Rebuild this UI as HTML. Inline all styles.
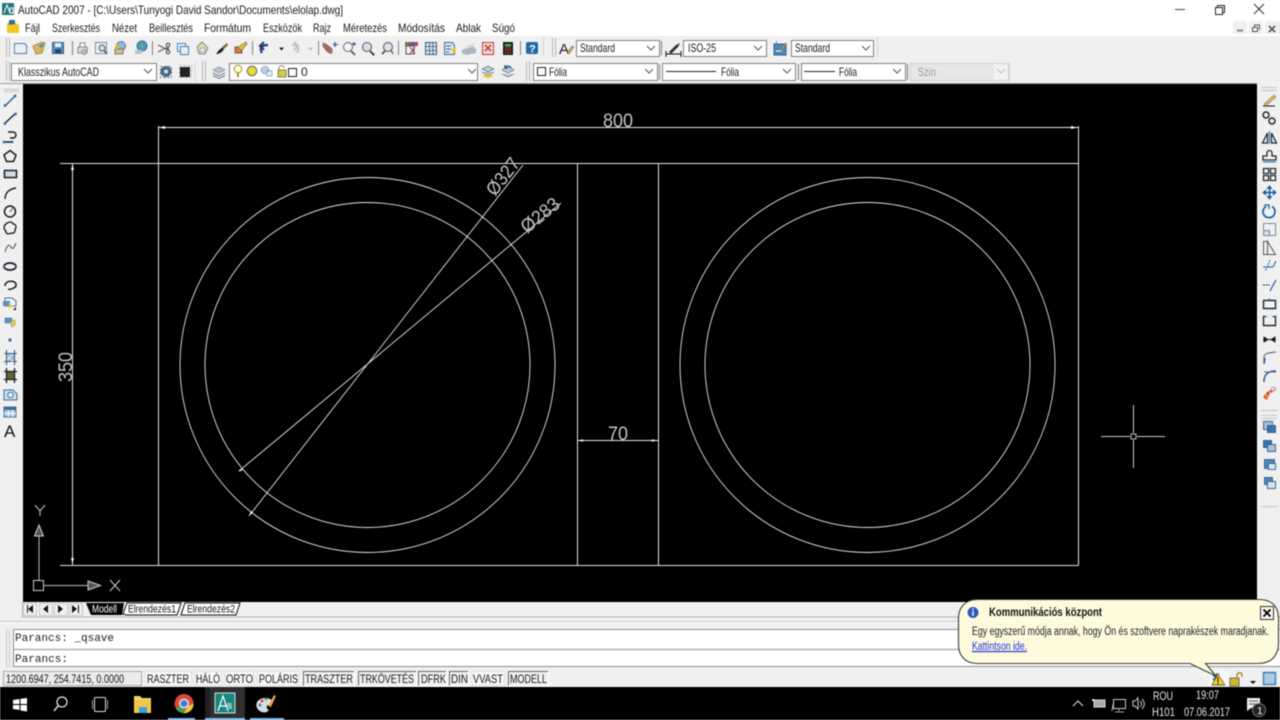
<!DOCTYPE html>
<html lang="hu"><head><meta charset="utf-8"><title>AutoCAD 2007</title>
<style>
html,body{margin:0;padding:0;width:1280px;height:720px;overflow:hidden;background:#f0f0f0}
svg{display:block;position:absolute;left:0;top:0;filter:blur(.45px)}
text{font-family:"Liberation Sans",sans-serif;font-size:12px;fill:#1a1a1a}
.m{font-family:"Liberation Mono",monospace;font-size:11px}
.d{fill:#c4c4c4;font-size:19px}
.ln{stroke:#e4e4e4;stroke-width:1;fill:none}
.th{stroke:#e4e4e4;stroke-width:.9;fill:none}
.c{fill:#fff;stroke:#808080}
.ar{fill:none;stroke:#555;stroke-width:1}
.g{stroke:#b5b5b5;stroke-width:1;fill:none}
</style></head><body>
<svg width="1280" height="720" viewBox="0 0 1280 720" xmlns="http://www.w3.org/2000/svg">
<!-- base -->
<rect width="1280" height="720" fill="#f0f0f0"/>
<rect width="1280" height="36" fill="#fff"/>
<rect x="23" y="84" width="1234" height="518" fill="#000"/>
<path d="M0 83.500H1257" stroke="#a0a0a0"/>
<!-- title -->
<rect x="2" y="3" width="12" height="12" fill="#1f7a78"/><path d="M4 13l3-8 3 8M10 8h3v5h-3z" stroke="#fff" fill="none"/>
<text x="18" y="14" textLength="325" lengthAdjust="spacingAndGlyphs">AutoCAD 2007 - [C:\Users\Tunyogi David Sandor\Documents\elolap.dwg]</text>
<path d="M1175 9.500h10" stroke="#444"/><path d="M1215.500 7.500h7v7h-7zM1217.500 7.500v-2h7v7h-2" fill="none" stroke="#222"/><path d="M1254 4l10 10M1264 4l-10 10" stroke="#333"/>
<!-- menu -->
<path d="M7 33V23l5-2 7 4v8z" fill="#f2c81e"/><path d="M9 25V20h6v4z" fill="#2c6db0"/>
<text x="25" y="32" textLength="15" lengthAdjust="spacingAndGlyphs">Fájl</text>
<text x="52" y="32" textLength="48" lengthAdjust="spacingAndGlyphs">Szerkesztés</text>
<text x="112" y="32" textLength="25" lengthAdjust="spacingAndGlyphs">Nézet</text>
<text x="149" y="32" textLength="44" lengthAdjust="spacingAndGlyphs">Beillesztés</text>
<text x="204" y="32" textLength="47" lengthAdjust="spacingAndGlyphs">Formátum</text>
<text x="263" y="32" textLength="39" lengthAdjust="spacingAndGlyphs">Eszközök</text>
<text x="313" y="32" textLength="18" lengthAdjust="spacingAndGlyphs">Rajz</text>
<text x="343" y="32" textLength="44" lengthAdjust="spacingAndGlyphs">Méretezés</text>
<text x="398" y="32" textLength="47" lengthAdjust="spacingAndGlyphs">Módosítás</text>
<text x="456" y="32" textLength="25" lengthAdjust="spacingAndGlyphs">Ablak</text>
<text x="492" y="32" textLength="23" lengthAdjust="spacingAndGlyphs">Súgó</text>
<rect x="1233" y="21" width="14" height="13" fill="#f0f0f0"/><rect x="1249" y="21" width="14" height="13" fill="#f0f0f0"/><rect x="1265" y="21" width="15" height="13" fill="#f0f0f0"/>
<path d="M1237 30.500h6" stroke="#556" stroke-width="1.300"/><path d="M1252.500 27.500h5v4h-5zM1254.500 27v-2h5v4h-1" fill="none" stroke="#556"/><path d="M1269 26l6 6M1275 26l-6 6" stroke="#556" stroke-width="1.600"/>
<!-- toolbar grips and separators -->
<path d="M6.500 38v19M9.500 38v19M6.500 61v20M9.500 61v20M202.500 61v20M205.500 61v20M552.500 38v19M555.500 38v19M526.500 61v20M529.500 61v20" class="g"/>
<path d="M72.500 41v14M152.500 41v14M252.500 41v14M318.500 41v14M398.500 41v14M520.500 41v14M661.500 41v14M776.500 41v14M659.500 64v16M798.500 64v16M907.500 64v16" stroke="#808080"/>
<path d="M543.500 37v20M877.500 37v20M1009.500 62v20M195 62v20" stroke="#d4d4d4"/>
<!-- combos -->
<rect class="c" x="576.500" y="40.500" width="83" height="16"/><rect class="c" x="683.500" y="40.500" width="83" height="16"/><rect class="c" x="791.500" y="40.500" width="82" height="16"/>
<rect class="c" x="11.500" y="63.500" width="145" height="17"/><rect class="c" x="229.500" y="63.500" width="248" height="17"/><rect class="c" x="533.500" y="63.500" width="124" height="17"/><rect class="c" x="662.500" y="63.500" width="133" height="17"/><rect class="c" x="801.500" y="63.500" width="104" height="17"/>
<rect x="910.500" y="63.500" width="98" height="17" fill="#e7e7e7" stroke="#d0d0d0"/><rect x="994" y="64" width="14" height="16" fill="#f2f2f2"/>
<path class="ar" d="M647 46l4 4 4-4M754 46l4 4 4-4M862 46l4 4 4-4M144 69l4 4 4-4M468 69l4 4 4-4M645 69l4 4 4-4M783 69l4 4 4-4M893 69l4 4 4-4"/><path d="M997 69l4 4 4-4" fill="none" stroke="#bbb"/>
<text x="580" y="52" textLength="35" lengthAdjust="spacingAndGlyphs">Standard</text>
<text x="688" y="52" textLength="28" lengthAdjust="spacingAndGlyphs">ISO-25</text>
<text x="795" y="52" textLength="35" lengthAdjust="spacingAndGlyphs">Standard</text>
<text x="18" y="76" textLength="81" lengthAdjust="spacingAndGlyphs">Klasszikus AutoCAD</text>
<text x="301" y="76">0</text>
<rect x="537.500" y="67.500" width="8" height="8" fill="#fff" stroke="#222"/><text x="549" y="76" textLength="18" lengthAdjust="spacingAndGlyphs">Fólia</text>
<path d="M666 71.500h50" stroke="#222"/><text x="721" y="76" textLength="18" lengthAdjust="spacingAndGlyphs">Fólia</text>
<path d="M804 71.500h31" stroke="#222"/><text x="839" y="76" textLength="18" lengthAdjust="spacingAndGlyphs">Fólia</text>
<text x="918" y="76" textLength="18" lengthAdjust="spacingAndGlyphs" style="fill:#9a9a9a">Szín</text>
<!-- toolbar row 1 icons -->
<path d="M14.500 43.500h10l2 2v8h-12z" fill="#e8f1fa" stroke="#4f7fa8"/>
<path d="M33 46l9-4 3 1-3 10-6 1z" fill="#d9b45a" stroke="#9a7b35" stroke-width=".8"/><path d="M38 46l6-3-2 5z" fill="#4a8fc9"/>
<path d="M52.500 42.500h11v11h-11z" fill="#5d8fc0" stroke="#2f5f90"/><rect x="55" y="43" width="6" height="4" fill="#e6eff8"/><rect x="55" y="49" width="6" height="4" fill="#29496b"/>
<path d="M78 47h9v6h-9z" fill="#ddd" stroke="#888"/><path d="M80 43h5v4h-5z" fill="#fff" stroke="#888"/><circle cx="84" cy="52" r="2.500" fill="#bbb" stroke="#888" stroke-width=".7"/>
<path d="M95.500 42.500h11v11h-11z" fill="#eef4fa" stroke="#6b8fae"/><circle cx="102" cy="48" r="3" fill="#cfe1f0" stroke="#555"/><path d="M104 50l3 4" stroke="#555" stroke-width="1.500"/>
<circle cx="121" cy="46" r="4.500" fill="#8eb7d8" stroke="#5f7c93"/><path d="M115 49h8v5h-8z" fill="#cfc088" stroke="#666" stroke-width=".8"/><circle cx="117" cy="47" r="2" fill="#e5b52a"/>
<circle cx="142" cy="46" r="5" fill="#4d95cc" stroke="#3a6e96"/><path d="M140 43l4 2-2 3zM135 50h8l-2 4h-6z" fill="#7cb35a"/><path d="M135 50h7v4h-7z" fill="#ccd" opacity=".8"/>
<path d="M158 45l8 4h3M158 52l8-4h3" stroke="#556" fill="none"/><circle cx="168" cy="45" r="1.800" fill="none" stroke="#333"/><circle cx="168" cy="52" r="1.800" fill="none" stroke="#333"/>
<path d="M177.500 43.500h8v8h-8z" fill="#e8f1fa" stroke="#4f7fa8"/><path d="M180.500 46.500h8v8h-8z" fill="#e8f1fa" stroke="#4f7fa8"/>
<path d="M197 47l5-5 6 6-3 6h-6z" fill="#e9d9a0" stroke="#7f8a95"/><path d="M200 48h5v4h-5z" fill="#dde8f2" stroke="#7f8a95" stroke-width=".6"/>
<path d="M216 54l3-4 8-6-5 8-4 2z" fill="#222"/><path d="M222 47l5-4 1 2-4 4z" fill="#7a6a45"/>
<path d="M235 47h7v6h-7z" fill="#e7783b" stroke="#335" stroke-width=".7"/><path d="M238 47l8-5 1 2-6 7z" fill="#e3c02b" stroke="#665" stroke-width=".7"/>
<path d="M262 53c-3-5 0-8 6-8M264 42l-4 4 4 4" stroke="#1c3f78" stroke-width="2.200" fill="none"/><path d="M279 47.500h5l-2.500 3z" fill="#222"/>
<path d="M297 53c3-5 0-8-5-8M294 42l4 4-4 4" stroke="#c4c4c4" stroke-width="2" fill="none"/><path d="M308 47.500h5l-2.500 3z" fill="#bbb"/>
<path d="M323 43c3 1 6 3 9 6v4c-3 1-5-1-9-7z" fill="#a76b66" stroke="#8a5550" stroke-width=".7"/><path d="M335 42v5M333 44.500h5" stroke="#2366aa" stroke-width="1.200"/>
<circle cx="348" cy="47" r="4.500" fill="#eef4fa" stroke="#6a6a6a"/><path d="M351 51l4 4" stroke="#555" stroke-width="1.600"/><path d="M352 44h4M354 42v4" stroke="#335" stroke-width=".9"/>
<circle cx="367" cy="47" r="4.500" fill="#cfe1f0" stroke="#555"/><path d="M370 51l3 3" stroke="#333" stroke-width="1.600"/><path d="M373 54l1 1" stroke="#000" stroke-width="2"/>
<circle cx="388" cy="47" r="4.500" fill="#dde" stroke="#555"/><path d="M385 51l-3 3" stroke="#444" stroke-width="1.600"/><path d="M391 50l2 4" stroke="#666" stroke-width="1.500"/>
<rect x="405" y="42" width="13" height="4" fill="#c23c6e"/><rect x="405" y="42" width="3" height="4" fill="#3e9a45"/><rect x="411" y="42" width="3" height="4" fill="#2a6bb0"/><path d="M406 46h8v8h-8z" fill="#eee" stroke="#555"/><path d="M410 47l5 7M415 47l-5 7" stroke="#933" stroke-width="1"/>
<rect x="425.500" y="42.500" width="11" height="12" fill="#d3e2ef" stroke="#44606f"/><path d="M425 46.500h11M425 50.500h11M429.500 42v12M433 42v12" stroke="#44606f" stroke-width=".8"/>
<path d="M444.500 42.500h8l2 3v9h-10z" fill="#d6e4f0" stroke="#446b8c"/><path d="M446 46h5M446 49h5M446 52h3" stroke="#446b8c"/><circle cx="454" cy="50" r="2" fill="#f0c521"/>
<path d="M462 50l10-4 4 3v4l-10 2-4-2z" fill="#a8b6c0"/><path d="M465 46l8-3 2 3-9 3z" fill="#d8e2e8"/>
<rect x="482.500" y="42.500" width="11" height="12" fill="#f5d8d8" stroke="#c0392b"/><path d="M485 45l6 6M491 45l-6 6" stroke="#c0392b" stroke-width="1.500"/>
<rect x="503" y="42" width="10" height="13" fill="#1c1c1c"/><rect x="505" y="44" width="6" height="2.500" fill="#4fae5a"/><path d="M505 48h6M505 50h6M505 52.500h6" stroke="#d04030" stroke-width="1.200" stroke-dasharray="1.500 .8"/>
<rect x="526" y="42" width="12" height="12" rx="2" fill="#2268aa"/><text x="529" y="52.500" style="fill:#fff;font-weight:bold;font-size:11px">?</text>
<!-- style icons -->
<text x="559" y="54" style="font-size:15px;fill:#222">A</text><path d="M567 53l5-7 2 1-5 7z" fill="#d2ad52" stroke="#555" stroke-width=".5"/>
<path d="M666 54h15M666 51v6M681 51v6" stroke="#111"/><path d="M669 52l7-7 4-2-2 4-7 7z" fill="#333"/>
<rect x="774" y="44" width="12" height="11" fill="#4f86bd" stroke="#305e8b"/><path d="M776 51h6" stroke="#fff"/><path d="M780 50l6-7 1 1-6 7z" fill="#c9a24a" stroke="#555" stroke-width=".4"/>
<!-- row 2 icons -->
<circle cx="166" cy="71.500" r="5.500" fill="#4a6c82"/><circle cx="166" cy="71.500" r="2" fill="#dde"/><path d="M160.500 66.500h11v11h-11z" fill="none" stroke="#667" stroke-dasharray="2 2"/>
<rect x="180" y="67" width="10" height="10" fill="#222"/><rect x="179.500" y="65.500" width="12" height="12" fill="none" stroke="#aaa" stroke-dasharray="2 2"/>
<path d="M213 70l6-3 6 3-6 3z" fill="#b8c9d8" stroke="#778" stroke-width=".6"/><path d="M213 73l6 3 6-3M213 75.500l6 3 6-3" fill="none" stroke="#778"/>
<circle cx="238" cy="69" r="3.800" fill="#fffbe0" stroke="#a99020"/><path d="M237 73h2v4h-2z" fill="#a99020"/>
<circle cx="252" cy="71" r="4.800" fill="#f3d92a" stroke="#3c6f95"/>
<circle cx="265" cy="70" r="3.800" fill="#bcd0e0" stroke="#6a8caa" stroke-dasharray="1.500 1"/><rect x="267" y="71" width="5" height="5" fill="#e8f1fa" stroke="#6a8caa" stroke-width=".7"/>
<rect x="278" y="70" width="8" height="7" fill="#d6cf30" stroke="#666" stroke-width=".8"/><path d="M279 70v-2c0-3 5-3 5 0" stroke="#888" fill="none"/>
<rect x="288.500" y="68.500" width="8" height="8" fill="#fff" stroke="#222"/>
<path d="M482 69l6-3 6 3-6 3zM482 72l6 3 6-3" fill="#b8c9d8" stroke="#678" stroke-width=".7"/><path d="M482 76l6 2 6-2-6-2z" fill="#e3c62b"/>
<path d="M502 70l6-4 6 4-6 3zM502 74l6 3 6-3" fill="#b8c9d8" stroke="#678" stroke-width=".7"/><path d="M505 68c2-3 5-2 6 0M505 65v3h3" stroke="#1e4f8f" fill="none" stroke-width="1.300"/>
<!-- left toolbar -->
<path d="M4 91.500h15M4 89.500h15" stroke="#c4c4c4"/>
<g fill="none" stroke="#1b1b1b">
<path d="M5 106l11-11" stroke="#2a5f9a" stroke-width="1.400"/><path d="M4 124L16 113" stroke-width="1.400"/><path d="M4 142h8M8 132h5a3 3 0 0 1 0 6h-3" stroke-width="1.400"/>
<path d="M10 150.500l6 4.500-2.500 6.500h-7l-2.500-6.500z" stroke-width="1.500"/><path d="M4.500 170.500h12v7h-12z" stroke-width="1.500" fill="#cfdfee"/>
<path d="M5 199c0-6 4-10 11-11" stroke-width="1.400"/><circle cx="10" cy="211.500" r="5.500" stroke-width="1.500"/><path d="M10 212l3-4" stroke="#1f5f9e"/>
<path d="M6 224c3-3 7-2 7 0 3 0 4 4 2 5 1 3-2 5-4 4-3 2-6 0-5-2-3-2-2-6 0-7z" stroke-width="1.300"/>
<path d="M5 252c2-7 4-8 6-5 2 3 3 1 5-4" stroke="#666" stroke-width="1.200"/><ellipse cx="10" cy="266.500" rx="6" ry="3.500" stroke-width="1.700"/>
<path d="M5 286c0-6 10-6 11-2s-6 6-8 5" stroke-width="1.500"/></g>
<circle cx="4" cy="266.500" r="1.200" fill="#2a6bb0"/><circle cx="16" cy="266.500" r="1.200" fill="#2a6bb0"/><circle cx="5" cy="105.500" r="1.400" fill="#2a6bb0"/><circle cx="15" cy="96" r="1.400" fill="#2a6bb0"/><circle cx="5" cy="123.500" r="1.400" fill="#2a6bb0"/><circle cx="15.500" cy="114" r="1.400" fill="#2a6bb0"/><circle cx="4" cy="142" r="1.400" fill="#2a6bb0"/><circle cx="12" cy="142" r="1.400" fill="#2a6bb0"/>
<path d="M5 298h7l4 3v5H5z" fill="#eef4fa" stroke="#4b6e8a"/><rect x="3" y="301" width="7" height="5" fill="#5f8fc0"/><path d="M9 303l4 3-4 3z" fill="#e6d32d"/><path d="M16 307v3h-3z" fill="#111"/>
<path d="M5 318h7v5H5z" fill="#5f8fc0" stroke="#3a6a98" stroke-width=".6"/><path d="M10 322l5-2v5l-3 2z" fill="#e6d32d" stroke="#888" stroke-width=".6"/>
<rect x="8.500" y="338.500" width="3" height="3" fill="#2a6bb0"/>
<rect x="6" y="353" width="9" height="9" fill="#a9bccb"/><path d="M4 353.500h13M4 361.500h13M6.500 350v15M14.500 350v15" stroke="#2f5f8a" stroke-width="1.100"/><path d="M7 356l6 6M7 360l6-6" stroke="#fff" stroke-width=".7"/>
<rect x="6" y="371" width="9" height="9" fill="#6a6130"/><path d="M4 371.500h13M4 379.500h13M6.500 368v15M14.500 368v15" stroke="#122" stroke-width="1.300"/>
<path d="M4 390h9l4 4v6H4z" fill="#cfe0ee" stroke="#3c6f95"/><circle cx="10.500" cy="395" r="2.800" fill="#eef4fa" stroke="#3c6f95"/>
<rect x="4" y="407" width="12" height="10" fill="#a9c6e4" stroke="#3c6f95"/><rect x="4" y="407" width="12" height="3" fill="#3c6f95"/><path d="M4 413.500h12M8.500 410v7M12.500 410v7" stroke="#fff"/>
<text x="4" y="437" style="font-size:17px;fill:#111">A</text>
<!-- right toolbar -->
<path d="M1261 87.500h16M1261 90.500h16M1261 415.500h16M1261 418.500h16M1261 410.500h17M1261 506.500h17" stroke="#c4c4c4"/>
<g fill="none" stroke="#1f2a33">
<path d="M1263 106h12" stroke="#111"/><path d="M1264 104l10-9 2 2-10 9z" fill="#e0b84a" stroke="#777" stroke-width=".6"/>
<circle cx="1266" cy="115" r="3" stroke-width="1.500"/><circle cx="1272" cy="121" r="3" stroke-width="1.500"/>
<path d="M1269.500 131v13" stroke="#2a6bb0"/><path d="M1267.500 133l-5 10h5zM1271.500 133l5 10h-5z" stroke-width="1.300"/>
<path d="M1263 160h13v-4h-4v-3a2.500 2.500 0 0 0-5 0v3h-4z" stroke-width="1.300"/><path d="M1263 162h13" stroke="#2a6bb0"/>
<path d="M1263.500 168.500h5v5h-5zM1270.500 168.500h5v5h-5zM1263.500 175.500h5v5h-5zM1270.500 175.500h5v5h-5z" stroke-width="1.300"/>
<path d="M1269.500 187v11M1264 192.500h11" stroke="#1f5f9e" stroke-width="1.500"/><path d="M1267 189l2.500-3 2.500 3M1267 196l2.500 3 2.500-3M1266 190l-3 2.500 3 2.500M1273 190l3 2.500-3 2.500" fill="#1f5f9e" stroke="#1f5f9e"/>
<path d="M1266 206.500a6 6 0 1 0 6 0" stroke="#1f5f9e" stroke-width="1.700"/><path d="M1264 205h5v4" stroke="#1f5f9e" stroke-width="1.200"/>
<path d="M1263.500 223.500h12v12h-12z" stroke="#7a8a96"/><path d="M1263.500 230.500h6v5h-6z" fill="#cfe0ee" stroke="#7a8a96"/>
<path d="M1263.500 241.500h4v13h-4zM1267.500 241.500l8 13h-8z" stroke="#555"/>
<path d="M1263 267h10l3-6" stroke="#1f5f9e"/><path d="M1270 260l-3 8-2 3" stroke="#1f5f9e" stroke-dasharray="2 1"/>
<path d="M1263 285h7" stroke="#222" stroke-dasharray="2 1"/><path d="M1270 291l6-11" stroke="#1f5f9e" stroke-width="1.200"/>
<path d="M1263.500 300.500h12v8h-12z" stroke-width="1.400" fill="#eef4fa"/><circle cx="1269.500" cy="300" r="1.200" fill="#1f5f9e" stroke="none"/>
<path d="M1265 316.500h-1.500v9h12v-9H1274" stroke-width="1.400"/><path d="M1265 316.500h2M1272 316.500h2" stroke="#1f5f9e"/>
<path d="M1263 339.500h13" stroke-width="1.100"/><path d="M1264 337l4 2.500-4 2.500zM1275 337l-4 2.500 4 2.500z" fill="#111"/>
<path d="M1264 364v-8c2-3 4-3 12-4" stroke="#666" stroke-width="1.100"/><path d="M1264 364l1-6" stroke="#1f5f9e" stroke-width="1.500"/>
<path d="M1264 382c0-7 3-11 12-11" stroke="#1f5f9e" stroke-width="1.500"/><path d="M1264 372h12" stroke="#666"/>
</g>
<path d="M1263 397l5-6 2 2-3 7zM1269 391l6-4 1 3-5 3z" fill="#d9482b"/><path d="M1265 394l3 1-1 4z" fill="#edc022"/><circle cx="1273" cy="389" r="1.800" fill="#eee" stroke="#aaa"/>
<g stroke="#2f5f8a" stroke-width=".9">
<rect x="1263.500" y="421.500" width="9" height="8" fill="#a8c0d6"/><rect x="1267.500" y="425.500" width="8" height="7" fill="#3b74ad"/>
<rect x="1263.500" y="440.500" width="8" height="7" fill="#3b74ad"/><rect x="1267.500" y="444.500" width="8" height="7" fill="#a8c0d6"/>
<rect x="1264.500" y="459.500" width="10" height="9" fill="#4d87be"/><rect x="1268.500" y="463.500" width="7" height="6" fill="#dce7f0"/>
<rect x="1264.500" y="477.500" width="8" height="7" fill="#4d87be"/><rect x="1267.500" y="481.500" width="8" height="7" fill="#d6e4f0"/>
</g>
<!-- drawing -->
<g shape-rendering="crispEdges">
<path class="ln" d="M158.500 126v439.500M1078.500 126v439.500M577.500 163v402M658.500 163v402M60 163.500H1078.500M60 565.500H1078.500M72.500 163v402M158 127.500H1078M578 440.500H658"/>
</g>
<path d="M159 127.500l6-1.500v3zM1077 127.500l-6-1.500v3zM72.500 164l-1.500 6h3zM72.500 564l-1.500-6h3zM578 440.500l5-1.200v2.400zM657 440.500l-5-1.200v2.400z" fill="#fff"/>
<g class="th">
<circle cx="367.500" cy="365" r="187.500"/><circle cx="367.500" cy="365" r="162.500"/>
<circle cx="867.500" cy="365" r="187.500"/><circle cx="867.500" cy="365" r="162.500"/>
<path d="M249 516L523 165M239 471L561 203"/>
</g>
<path d="M251 511l-2 5 4-3.500zM241 469l-2.500 2.500 4-1z" fill="#fff"/>
<text class="d" text-anchor="middle" x="618" y="127" textLength="30" lengthAdjust="spacingAndGlyphs">800</text>
<text class="d" text-anchor="middle" transform="translate(72 367) rotate(-90)" textLength="30" lengthAdjust="spacingAndGlyphs">350</text>
<text class="d" text-anchor="middle" x="618" y="440" textLength="20" lengthAdjust="spacingAndGlyphs">70</text>
<text class="d" transform="translate(495 197) rotate(-52)" textLength="42" lengthAdjust="spacingAndGlyphs">Ø327</text>
<text class="d" transform="translate(527 234) rotate(-39)" textLength="44" lengthAdjust="spacingAndGlyphs">Ø283</text>
<!-- UCS -->
<rect x="33.500" y="580.500" width="10" height="10" fill="none" stroke="#ccc"/>
<path d="M39 580V535M44 585.500H89" stroke="#bbb" fill="none"/>
<path d="M39 525l-4.500 11h9zM100.500 585.500L88 581v9z" fill="#555" stroke="#ccc"/>
<path d="M35 505l5 6 5-6M40 511v5M110 580l10 11M120 580l-10 11" stroke="#ccc" fill="none"/>
<!-- crosshair -->
<path d="M1101 436.500H1130M1137 436.500H1165M1133.500 405V433M1133.500 440V468" stroke="#ccc"/><rect x="1131" y="434" width="5" height="5" fill="none" stroke="#bbb"/>
<!-- tabs -->
<rect x="23" y="602" width="1257" height="15" fill="#f0f0f0"/>
<path d="M22.500 602v15h1258" stroke="#b4b4b4" fill="none"/>
<g fill="#f0f0f0" stroke="#c8c8c8"><rect x="23.500" y="603.500" width="13" height="12"/><rect x="39.500" y="603.500" width="13" height="12"/><rect x="54.500" y="603.500" width="13" height="12"/><rect x="69.500" y="603.500" width="13" height="12"/></g>
<path d="M27.500 605v8" stroke="#111"/><path d="M33 605v8l-5-4zM48 605v8l-5-4zM58 605v8l5-4zM72 605v8l5-4z" fill="#111"/><path d="M78.500 605v8" stroke="#111"/>
<path d="M86 603l5 12h31l2-12z" fill="#000"/><path d="M123 614l4-11h54l-4 12h-50zM181 615l4-12h55l-4 12z" fill="#fff" stroke="#111"/>
<text x="92" y="612.500" textLength="25" lengthAdjust="spacingAndGlyphs" style="fill:#fff;font-size:11px">Modell</text>
<text x="128" y="612.500" textLength="48" lengthAdjust="spacingAndGlyphs" style="font-size:11px">Elrendezés1</text>
<text x="187" y="612.500" textLength="48" lengthAdjust="spacingAndGlyphs" style="font-size:11px">Elrendezés2</text>
<path d="M0 621.500H960" stroke="#c6c6c6"/><path d="M0 622.500H960" stroke="#fff"/>
<!-- command -->
<path d="M6.500 629v38M9.500 629v38" stroke="#c8c8c8"/>
<rect x="13.500" y="629.500" width="1280" height="37" fill="#fff" stroke="#8c8c8c"/>
<path d="M14 649.500H1280" stroke="#b0b0b0" stroke-width="1.500"/>
<text class="m" x="15" y="641" textLength="99" lengthAdjust="spacingAndGlyphs">Parancs: _qsave</text>
<text class="m" x="15" y="662" textLength="53" lengthAdjust="spacingAndGlyphs">Parancs:</text>
<!-- status bar -->
<rect x="0" y="667" width="1280" height="20" fill="#f0f0f0"/>
<rect x="3.500" y="671.500" width="138" height="14" fill="#ececec" stroke="#a8a8a8"/>
<text x="6" y="683" textLength="118" lengthAdjust="spacingAndGlyphs">1200.6947, 254.7415, 0.0000</text>
<g fill="#f7f7f7" stroke="#e2e2e2">
<rect x="145.500" y="671.500" width="46" height="14"/><rect x="195.500" y="671.500" width="26" height="14"/><rect x="225.500" y="671.500" width="28" height="14"/><rect x="257.500" y="671.500" width="41" height="14"/><rect x="472.500" y="671.500" width="32" height="14"/>
</g>
<path d="M303.500 686V671.500H354M358.500 686V671.500H416M418.500 686V671.500H446M449.500 686V671.500H468M508.500 686V671.500H548" fill="none" stroke="#666"/>
<path d="M354.500 671v15H303M416.500 671v15H358M446.500 671v15H418M468.500 671v15H449M548.500 671v15H508" fill="none" stroke="#fff"/>
<text x="147" y="683" textLength="42" lengthAdjust="spacingAndGlyphs">RASZTER</text>
<text x="196" y="683" textLength="24" lengthAdjust="spacingAndGlyphs">HÁLÓ</text>
<text x="226" y="683" textLength="27" lengthAdjust="spacingAndGlyphs">ORTO</text>
<text x="259" y="683" textLength="39" lengthAdjust="spacingAndGlyphs">POLÁRIS</text>
<text x="305" y="683" textLength="48" lengthAdjust="spacingAndGlyphs">TRASZTER</text>
<text x="360" y="683" textLength="54" lengthAdjust="spacingAndGlyphs">TRKÖVETÉS</text>
<text x="421" y="683" textLength="25" lengthAdjust="spacingAndGlyphs">DFRK</text>
<text x="451" y="683" textLength="17" lengthAdjust="spacingAndGlyphs">DIN</text>
<text x="473" y="683" textLength="30" lengthAdjust="spacingAndGlyphs">VVAST</text>
<text x="510" y="683" textLength="37" lengthAdjust="spacingAndGlyphs">MODELL</text>
<!-- status right icons -->
<rect x="1209" y="671" width="20" height="15" fill="#f7f7f7"/>
<path d="M1217 673l-4 12h11" fill="none" stroke="#345"/><path d="M1213 675l5 5M1213 680l6-6" stroke="#2a5f9a" stroke-width="1.300"/><path d="M1218 674l7 11h-13z" fill="#f2cf1d" stroke="#444" stroke-width=".6"/><path d="M1218 677v5M1218 683v1.500" stroke="#111"/>
<rect x="1230" y="678" width="9" height="8" fill="#d3b92a" stroke="#555" stroke-width=".8"/><path d="M1237 677v-2c0-3 5-3 5 0v2" stroke="#a08d25" stroke-width="1.500" fill="none"/>
<path d="M1250 681h6l-3 3z" fill="#111"/>
<rect x="1263.500" y="672.500" width="12" height="12" fill="#a9cbe8" stroke="#3975a8" stroke-width="1.300"/>
<!-- balloon -->
<path d="M977 599.500H1259C1273 599.500 1278.500 608 1278.500 618V643C1278.500 655 1272 663.500 1258 663.500H1205.500L1216 676L1190 663.500H977C965 663.500 958.500 655 958.500 645V618C958.500 608 965 599.500 977 599.500z" fill="#fdfbdc" stroke="#3a3a3a" stroke-width="1.100"/>
<circle cx="973" cy="612.500" r="5.500" fill="#2e55c0"/><path d="M973 608.500v1.500M973 611v5" stroke="#fff" stroke-width="1.400"/>
<text x="989" y="616" textLength="113" lengthAdjust="spacingAndGlyphs" style="font-size:11.500px;font-weight:bold;fill:#111">Kommunikációs központ</text>
<rect x="1260.500" y="606.500" width="13" height="13" fill="#f5f5f0" stroke="#333"/><path d="M1263.500 609.500l7 7M1270.500 609.500l-7 7" stroke="#000" stroke-width="1.800"/>
<text x="972" y="635" textLength="297" lengthAdjust="spacingAndGlyphs" style="font-size:11.500px;fill:#222">Egy egyszerű módja annak, hogy Ön és szoftvere naprakészek maradjanak.</text>
<text x="972" y="650" textLength="55" lengthAdjust="spacingAndGlyphs" style="font-size:11.500px;fill:#2030e0;text-decoration:underline">Kattintson ide.</text>
<!-- taskbar -->
<rect x="0" y="687" width="1280" height="33" fill="#000"/>
<rect x="205" y="687" width="40" height="33" fill="#2f2f2f"/><rect x="205" y="687" width="5" height="33" fill="#202020"/>
<path d="M13 700l6.500-1v5H13zM20.500 698.800L27 698v6h-6.500zM13 705h6.500v5L13 709zM20.500 705H27v6.500l-6.500-1z" fill="#fff"/>
<circle cx="62" cy="702" r="5" fill="none" stroke="#ddd" stroke-width="1.300"/><path d="M58 706l-4 5" stroke="#ddd" stroke-width="1.500"/>
<path d="M92.500 700v9M107.500 700v9" stroke="#999"/><rect x="94.500" y="697.500" width="11" height="14" rx="1" fill="none" stroke="#ddd"/>
<path d="M134 696h6l2 2h9v15h-17z" fill="#f4d36a"/><rect x="134" y="700" width="17" height="13" fill="#f2c84a"/><rect x="139" y="707" width="8" height="6" fill="#3b9fdc"/>
<circle cx="184" cy="703.500" r="9.500" fill="#de4a3a"/><path d="M184 703.500L176 709a9.500 9.500 0 0 0 8 4z" fill="#3aa655"/><path d="M176 708.500a9.500 9.500 0 0 0 8 4.500l4.500-7.500h5a9.500 9.500 0 0 1 -9.500 8z" fill="#3aa655"/><path d="M188 706l5.500-2.500c.2 5-4 9.500-9.500 9.500z" fill="#f4c63a"/><circle cx="184" cy="703.500" r="4.800" fill="#fff"/><circle cx="184" cy="703.500" r="3.600" fill="#3c7fd6"/>
<rect x="215" y="693" width="20" height="20" fill="#17877f" stroke="#ddd"/><path d="M218 711l5-15 5 15M220 706h7" stroke="#fff" fill="none" stroke-width="1.200"/><rect x="227" y="703" width="5" height="6" fill="#7fbdb9"/>
<path d="M257 708c-3-8 6-12 13-9 5 3 2 6-1 6-3 0-3 4 0 5-3 4-9 3-12-2z" fill="#d8dce2"/><circle cx="262" cy="701" r="1.500" fill="#d04a3a"/><circle cx="266" cy="699" r="1.400" fill="#3ba55a"/><circle cx="260" cy="705" r="1.500" fill="#3c7fd6"/><path d="M268 706l6-11 2 1-5 11z" fill="#e8a03a"/>
<rect x="168" y="718" width="27" height="2" fill="#76b9ed"/><rect x="205" y="718" width="40" height="2" fill="#76b9ed"/><rect x="250" y="718" width="34" height="2" fill="#76b9ed"/>
<path d="M1073 706l5-5 5 5" fill="none" stroke="#ddd" stroke-width="1.100"/>
<rect x="1094" y="700" width="11" height="7" fill="#aaa" stroke="#ddd"/><rect x="1092" y="699" width="2" height="2" fill="#ddd"/>
<rect x="1113.500" y="699.500" width="12" height="9" fill="none" stroke="#ccc"/><path d="M1113 704l-1 7M1119 708v3M1115 712h9" stroke="#aaa"/>
<path d="M1133 701h2l3-3v11l-3-3h-2zM1140 701c2 2 2 4 0 6M1142 699c3 3 3 7 0 10" fill="none" stroke="#ccc"/>
<text x="1153" y="700" textLength="20" lengthAdjust="spacingAndGlyphs" style="fill:#e8e8e8">ROU</text>
<text x="1152" y="716" textLength="23" lengthAdjust="spacingAndGlyphs" style="fill:#e8e8e8">H101</text>
<text x="1196" y="699" textLength="23" lengthAdjust="spacingAndGlyphs" style="fill:#e8e8e8">19:07</text>
<text x="1184" y="716" textLength="46" lengthAdjust="spacingAndGlyphs" style="fill:#e8e8e8">07.06.2017</text>
<path d="M1247 698h13v10h-9l-4 3z" fill="#eee"/><path d="M1249 701h9M1249 704h9" stroke="#555"/><circle cx="1259" cy="710" r="6.500" fill="#222" stroke="#777"/><text x="1257" y="714" style="fill:#fff;font-size:10px">1</text>
</svg>
</body></html>
